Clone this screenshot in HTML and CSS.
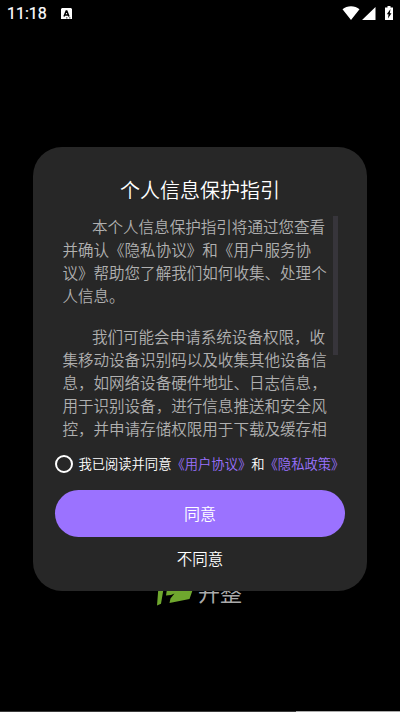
FILE: index.html
```
<!DOCTYPE html>
<html lang="zh-CN">
<head>
<meta charset="utf-8">
<title>个人信息保护指引</title>
<link rel="stylesheet" href="styles.css">
</head>
<body>
<div class="screen">
  <header class="status">
    <span class="time">11:18</span>
    <svg class="app" width="11" height="12" viewBox="0 0 11 12"><path fill="#fff" d="M1 0h9l1 1v10H0V1z"/><path fill="none" stroke="#000" stroke-width="1.5" d="M3 8.5 5.2 3h.6L8 8.5M3.8 7h3.5"/><path stroke="#000" stroke-width=".8" d="M5 9.9h1.5M8 9.9h1.5"/></svg>
    <svg class="signals" width="51" height="16" viewBox="0 0 51 16"><path fill="#fff" d="M.5 3.200C5-.9 13-.9 17.500 3.200L9 14zM33.500 1v13H20zM43 1.500h2.500V0h3v1.500H51V14h-8z"/><path fill="#000" d="M48.500 3 44.800 8.200H46.500L46 12.500 49.500 7.200H47.800z"/></svg>
  </header>
  <main class="dialog">
    <h1>个人信息保护指引</h1>
    <div class="scroll">
      <div class="copy">
        <p>本个人信息保护指引将通过您查看<br>并确认《隐私协议》和《用户服务协<br>议》帮助您了解我们如何收集、处理个<br>人信息。</p>
        <p>我们可能会申请系统设备权限，收<br>集移动设备识别码以及收集其他设备信<br>息，如网络设备硬件地址、日志信息，<br>用于识别设备，进行信息推送和安全风<br>控，并申请存储权限用于下载及缓存相</p>
      </div>
      <div class="thumb"></div>
    </div>
    <label class="consent"><span class="radio"></span><span>我已阅读并同意<a>《用户协议》</a>和<a>《隐私政策》</a></span></label>
    <button class="agree">同意</button>
    <button class="decline">不同意</button>
  </main>
  <div class="brand">
    <svg class="leaf" width="38" height="26" viewBox="0 0 38 26"><path fill="#6fa72e" d="M2.300 8h5.200L5 22.800 1 24.500zM11 8h26L33.500 18 13.500 22 14.500 17.500 18.500 12.500 15 14 10 14.500z"/></svg>
    <span>开整</span>
  </div>
  <div class="edge"></div>
</div>
</body>
</html>
```
FILE: styles.css
```
* { box-sizing: border-box; }
body { margin: 0; background: #000; font-family: "Noto Sans CJK SC", sans-serif; font-weight: 350; color: #fff; }
.screen { position: relative; width: 400px; height: 712px; overflow: hidden; display: flex; flex-direction: column; align-items: center; }
.status { width: 100%; height: 147px; flex: none; display: flex; align-items: flex-start; padding: 6px 7px 0; }
.time { font: 400 16px/16px Roboto, sans-serif; width: 54px; -webkit-text-stroke: .2px #fff; }
.app { margin-top: 2px; }
.signals { margin-left: auto; }
.dialog { position: relative; z-index: 1; width: 334px; height: 444px; flex: none; border-radius: 29px; background: #272727; padding: 28px 22.500px 0 22.400px; display: flex; flex-direction: column; }
h1 { margin: 0; font-size: 20px; line-height: 30px; font-weight: inherit; text-align: center; }
.scroll { height: 225px; margin-top: 11px; padding: 0 6.500px 0 7px; display: flex; justify-content: space-between; overflow: hidden; }
.copy { margin-top: -1px; font-size: 15.550px; line-height: 23px; color: #b0b0b0; white-space: nowrap; }
.copy p { margin: 0 0 18px; text-indent: 1.9em; }
.thumb { width: 5px; height: 139px; background: #37353b; flex: none; }
.consent { display: flex; align-items: center; height: 20px; margin-top: 13px; font-size: 13.300px; line-height: 20px; white-space: nowrap; }
.radio { width: 18px; height: 18px; border: 2px solid #fff; border-radius: 50%; margin-right: 5px; flex: none; }
a { color: #9b72ff; }
button { border: 0; padding: 0; font-family: inherit; font-weight: inherit; color: #fff; background: none; }
.agree { height: 47px; margin-top: 16px; border-radius: 24px; background: #9b72ff; font-size: 16px; line-height: 47px; flex: none; }
.decline { height: 24px; margin-top: 9px; font-size: 15.500px; line-height: 24px; }
.brand { display: flex; align-items: flex-start; width: 88px; margin-top: -12px; height: 30px; font-size: 22px; font-weight: 400; line-height: 24px; color: #aaa; white-space: nowrap; }
.leaf { margin: 2px 4px 0 0; flex: none; }
.edge { width: 100%; height: 1px; margin-top: auto; background: linear-gradient(90deg, #3b3b3b 296px, #aaa 296px); }
```
